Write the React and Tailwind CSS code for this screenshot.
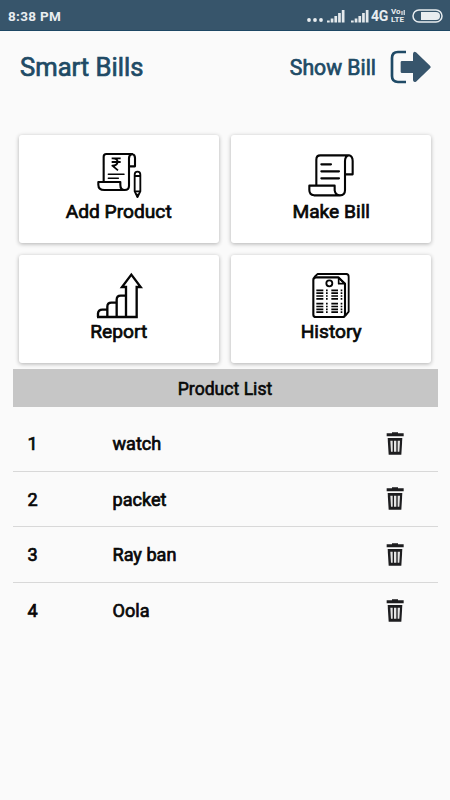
const ink = { fill: 'none', stroke: '#050505', strokeWidth: 6.3, strokeLinecap: 'round', strokeLinejoin: 'round' };

function CardSvg({ children }) {
  return <svg className="h-[60px] w-[65px] shrink-0" viewBox="-2 0 195 180" {...ink}>{children}</svg>;
}

function AddProductIcon() {
  return (
    <CardSvg>
      <g transform="translate(-3 0)">
        <path d="M54 109V35Q54 27 62 27H140Q130 29 130 40V122Q130 135 117 135H56Q38 135 38 119V111H104V119Q104 135 117 135M140 27Q148 29 148 39V64H130" />
        <path d="M78 40H105M78 51H105M82 40Q96 41 96 51Q94 62 80 62L97 76" strokeWidth="5.500" strokeLinecap="butt" />
        <path d="M68 88H115M68 100H98" strokeWidth="4.500" />
        <path d="M147 89Q147 80 155.500 80Q164 80 164 89V139L155.500 156L147 139ZM147 93H164M147 139H164" strokeWidth="5.500" />
        <path d="M152 148H159L155.500 156Z" fill="#050505" strokeWidth="3" />
      </g>
    </CardSvg>
  );
}

function MakeBillIcon() {
  return (
    <CardSvg>
      <path d="M50 120V44Q50 31 62 31H148Q136 34 136 48V136Q136 151 121 151H43Q29 149 29 135V122H105V136Q107 150 121 151M148 31Q159 34 159 48V88H138" />
      <path d="M65 58H94M65 79H118M65 100H118" />
    </CardSvg>
  );
}

function ReportIcon() {
  return (
    <CardSvg>
      <g transform="translate(-3 0)" strokeWidth="7" strokeLinejoin="miter" strokeLinecap="butt">
        <path d="M37 156V145Q38 134 50 134H65M65 156V125Q65 113 77 113H93M93 156V104Q93 92 105 92H121" />
        <path d="M34 156H153V66H165L137 29L109 66H121V156" />
      </g>
    </CardSvg>
  );
}

function HistoryIcon() {
  return (
    <CardSvg>
      <path d="M49 37H116L136 56V149Q136 156 129 156H49Q41 156 41 149V45Q41 37 49 37Z" />
      <path d="M45 35L54 27H140Q147 27 147 35V140L138 151" strokeWidth="5.500" />
      <path d="M117 39V56H136Z" strokeWidth="5" />
      <circle cx="89" cy="55" r="9" strokeWidth="5.500" />
      <path d="M50 76H71M50 84.500H71M50 93H71M50 101.500H71M50 116H71M50 124.500H71M50 133H71M50 141.500H71M95 76H115M95 84.500H115M95 93H115M95 101.500H115M95 116H115M95 124.500H115M95 133H115M95 141.500H115M79 76H84M79 84.500H84M79 93H84M79 101.500H84M79 116H84M79 124.500H84M79 133H84M79 141.500H84M123 76H128M123 84.500H128M123 93H128M123 101.500H128M123 116H128M123 124.500H128M123 133H128M123 141.500H128" strokeWidth="4.800" strokeLinecap="butt" />
    </CardSvg>
  );
}

function ExitIcon() {
  return (
    <svg className="h-[34px] w-[42px]" viewBox="0 0 126 102">
      <path d="M51 6H27Q9 6 9 24V78Q9 96 27 96H51" fill="none" stroke="#1f4a66" strokeWidth="8" />
      <path d="M39 33H72V11Q74 2 81 7L123 47Q127 51 123 55L81 95Q74 99 72 91V69H39Q35 69 35 65V37Q35 33 39 33Z" fill="#37556c" />
    </svg>
  );
}

function TrashIcon() {
  return (
    <svg className="h-[23px] w-[18px]" viewBox="0 0 54 69">
      <path d="M18 1H36V4H53V13H2V4H18Z" fill="#1d1d1f" />
      <path d="M5 18H49L46 68H8Z" fill="#1d1d1f" />
      <path d="M13 26H20V59H15ZM24 26H31V59H24ZM35 26H42L40 59H35Z" fill="#e5e5e5" />
    </svg>
  );
}

function Signal() {
  return (
    <svg className="h-[13px] w-[18px]" viewBox="0 0 18 13" fill="#e4e9ec">
      <path d="M0 10.500h2.700v2H0zM3.700 8.500h2.700v4H3.700zM7.400 6h2.700v6.500H7.400zM11.100 3h2.700v9.500h-2.700zM14.800 0h2.700v12.500h-2.700z" />
    </svg>
  );
}

function StatusBar() {
  return (
    <div className="flex h-[31px] items-center border-b border-[#1d4764] bg-[#37556b] pl-2 pr-[7px] pt-[2px] text-[#e9edf0]">
      <span className="text-[13.500px] font-bold leading-4 tracking-[0.3px]">8:38 PM</span>
      <div className="ml-auto flex items-center">
        <svg className="mr-[4px] mt-[7px] h-1 w-4" viewBox="0 0 16 4" fill="currentColor">
          <circle cx="2" cy="2" r="1.900" /><circle cx="8" cy="2" r="1.900" /><circle cx="14" cy="2" r="1.900" />
        </svg>
        <Signal />
        <span className="w-[6px]" />
        <Signal />
        <span className="ml-[2px] w-[18px] text-[14px] font-bold leading-4 tracking-[-0.3px]">4G</span>
        <div className="ml-[2px] flex w-[16px] flex-col text-[8px] font-bold leading-[8px]">
          <span className="flex h-[8px] items-center">
            Vo
            <svg className="h-[7px] w-[5px]" viewBox="0 0 5 7" fill="none" stroke="currentColor" strokeWidth="1.200">
              <path d="M1 2V6M3.200 1V6" />
            </svg>
          </span>
          <span className="h-[8px]">LTE</span>
        </div>
        <svg className="ml-[5px] h-[14px] w-[31px]" viewBox="0 0 31 14">
          <rect x="1" y="1" width="29" height="12" rx="6" fill="none" stroke="#e9edf0" strokeWidth="1.500" />
          <path d="M9 3H24Q28 3 28 7Q28 11 24 11H9Z" fill="#e9edf0" />
        </svg>
      </div>
    </div>
  );
}

const cards = [
  ['Add Product', AddProductIcon],
  ['Make Bill', MakeBillIcon],
  ['Report', ReportIcon],
  ['History', HistoryIcon],
];
const products = ['watch', 'packet', 'Ray ban', 'Oola'];

export default function App() {
  return (
    <div className="h-[800px] w-[450px] overflow-hidden bg-[#fafafa] font-['Roboto',sans-serif] text-[#080808]">
      <StatusBar />
      <header className="flex h-[72px] items-center pl-5 pr-[19px] text-[#204a65]">
        <h1 className="text-[25.600px] font-normal leading-8 [-webkit-text-stroke:0.7px_#204a65]">Smart Bills</h1>
        <span className="ml-auto mr-[13px] pt-px text-[21.200px] leading-8 [-webkit-text-stroke:0.7px_#204a65]">Show Bill</span>
        <ExitIcon />
      </header>
      <div className="mt-[31.700px] grid grid-cols-[200px_200px] gap-x-[12.500px] gap-y-3 pl-[18.700px]">
        {cards.map(([label, Icon]) => (
          <div key={label} className="flex h-[108px] flex-col items-center rounded-[3px] bg-white pt-[10px] shadow-[0_1px_4px_rgba(0,0,0,0.3)]">
            <Icon />
            <span className="-mt-[5px] text-[19.200px] leading-6 [-webkit-text-stroke:0.7px_#080808]">{label}</span>
          </div>
        ))}
      </div>
      <section className="mx-[12.500px] mt-[6px]">
        <h2 className="mb-[8.800px] flex h-[38.500px] items-center justify-center bg-[#c6c6c6] pt-[2px] text-[17.600px] font-normal [-webkit-text-stroke:0.6px_#080808]">Product List</h2>
        {products.map((name, i) => (
          <div key={name} className="flex h-[55.600px] items-center border-b border-[#d8d8d8] pl-[15px] pr-[34px] text-[18.100px] last:border-0 [-webkit-text-stroke:0.7px_#080808]">
            <span className="w-[85px] pt-px">{i + 1}</span>
            <span className="flex-1 pt-px">{name}</span>
            <TrashIcon />
          </div>
        ))}
      </section>
    </div>
  );
}
